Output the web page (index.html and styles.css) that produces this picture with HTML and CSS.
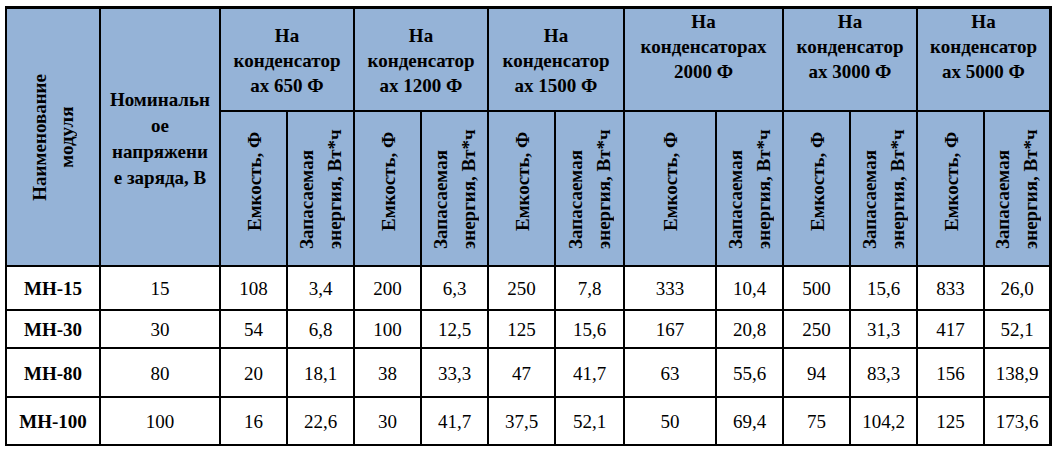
FILE: index.html
```html
<!DOCTYPE html>
<html lang="ru">
<head>
<meta charset="utf-8">
<title>Модули</title>
<link rel="stylesheet" href="styles.css">
</head>
<body>
<div class="sheet">
  <div class="grid">
    <div class="cell head tall">
      <span class="vert center">Наименование<br>модуля</span>
    </div>
    <div class="cell head tall volt">Номинальн<br>ое<br>напряжени<br>е заряда, В</div>

    <div class="cell head group">На<br>конденсатор<br>ах 650 Ф</div>
    <div class="cell head group">На<br>конденсатор<br>ах 1200 Ф</div>
    <div class="cell head group">На<br>конденсатор<br>ах 1500 Ф</div>
    <div class="cell head group top">На<br>конденсаторах<br>2000 Ф</div>
    <div class="cell head group top">На<br>конденсатор<br>ах 3000 Ф</div>
    <div class="cell head group top">На<br>конденсатор<br>ах 5000 Ф</div>

    <div class="cell head sub cap"><span class="vert">Емкость, Ф</span></div>
    <div class="cell head sub"><span class="vert">Запасаемая<br>энергия, Вт*ч</span></div>
    <div class="cell head sub cap"><span class="vert">Емкость, Ф</span></div>
    <div class="cell head sub"><span class="vert">Запасаемая<br>энергия, Вт*ч</span></div>
    <div class="cell head sub cap"><span class="vert">Емкость, Ф</span></div>
    <div class="cell head sub"><span class="vert">Запасаемая<br>энергия, Вт*ч</span></div>
    <div class="cell head sub cap"><span class="vert">Емкость, Ф</span></div>
    <div class="cell head sub"><span class="vert">Запасаемая<br>энергия, Вт*ч</span></div>
    <div class="cell head sub cap"><span class="vert">Емкость, Ф</span></div>
    <div class="cell head sub"><span class="vert">Запасаемая<br>энергия, Вт*ч</span></div>
    <div class="cell head sub cap"><span class="vert">Емкость, Ф</span></div>
    <div class="cell head sub"><span class="vert">Запасаемая<br>энергия, Вт*ч</span></div>

    <div class="cell data name">МН-15</div>
    <div class="cell data">15</div>
    <div class="cell data">108</div>
    <div class="cell data">3,4</div>
    <div class="cell data">200</div>
    <div class="cell data">6,3</div>
    <div class="cell data">250</div>
    <div class="cell data">7,8</div>
    <div class="cell data">333</div>
    <div class="cell data">10,4</div>
    <div class="cell data">500</div>
    <div class="cell data">15,6</div>
    <div class="cell data">833</div>
    <div class="cell data">26,0</div>

    <div class="cell data name">МН-30</div>
    <div class="cell data">30</div>
    <div class="cell data">54</div>
    <div class="cell data">6,8</div>
    <div class="cell data">100</div>
    <div class="cell data">12,5</div>
    <div class="cell data">125</div>
    <div class="cell data">15,6</div>
    <div class="cell data">167</div>
    <div class="cell data">20,8</div>
    <div class="cell data">250</div>
    <div class="cell data">31,3</div>
    <div class="cell data">417</div>
    <div class="cell data">52,1</div>

    <div class="cell data name">МН-80</div>
    <div class="cell data">80</div>
    <div class="cell data">20</div>
    <div class="cell data">18,1</div>
    <div class="cell data">38</div>
    <div class="cell data">33,3</div>
    <div class="cell data">47</div>
    <div class="cell data">41,7</div>
    <div class="cell data">63</div>
    <div class="cell data">55,6</div>
    <div class="cell data">94</div>
    <div class="cell data">83,3</div>
    <div class="cell data">156</div>
    <div class="cell data">138,9</div>

    <div class="cell data name">МН-100</div>
    <div class="cell data">100</div>
    <div class="cell data">16</div>
    <div class="cell data">22,6</div>
    <div class="cell data">30</div>
    <div class="cell data">41,7</div>
    <div class="cell data">37,5</div>
    <div class="cell data">52,1</div>
    <div class="cell data">50</div>
    <div class="cell data">69,4</div>
    <div class="cell data">75</div>
    <div class="cell data">104,2</div>
    <div class="cell data">125</div>
    <div class="cell data">173,6</div>
  </div>
</div>
</body>
</html>
```

FILE: styles.css
```css
html, body {
  margin: 0;
  padding: 0;
  background: #ffffff;
}

.sheet {
  padding: 6px 0 0 5px;
  font-family: "Liberation Serif", "DejaVu Serif", serif;
  color: #000000;
}

.grid {
  display: grid;
  width: fit-content;
  grid-template-columns: 92px 118px 65px 65px 65px 65px 65px 67px 90px 65px 65px 65px 65px 64px;
  grid-template-rows: 101px 153px 42px 36px 47px 46px;
  gap: 2px;
  padding: 3px 3px 2px 2px;
  background: #000000;
}

.cell {
  display: flex;
  align-items: center;
  justify-content: center;
  text-align: center;
  box-sizing: border-box;
  overflow: hidden;
}

.head {
  background: #95b3d7;
  font-weight: bold;
  font-size: 19px;
}

.tall {
  grid-row: span 2;
}

.volt {
  line-height: 26px;
  padding-top: 4px;
}

.group {
  grid-column: span 2;
  line-height: 25px;
  padding-top: 2px;
}

.group.top {
  align-items: flex-start;
  padding-top: 0;
}

.vert {
  writing-mode: vertical-rl;
  transform: rotate(180deg);
  line-height: 28px;
  height: 100%;
  text-align: start;
  white-space: nowrap;
}

.vert.center {
  text-align: center;
  line-height: 27px;
}

.tall .vert {
  height: auto;
}

.sub {
  align-items: stretch;
  padding: 8px 0 16px 0;
}

.sub.cap {
  padding: 8px 0 34px 2px;
}

.data {
  background: #ffffff;
  font-size: 19px;
  padding-top: 2px;
}

.data.name {
  font-weight: bold;
}
```
